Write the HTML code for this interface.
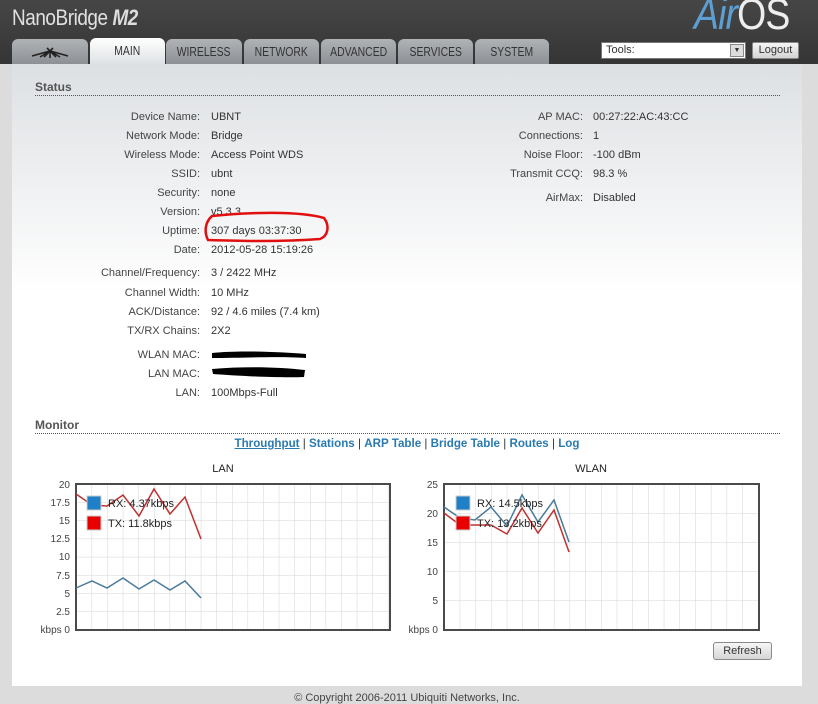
<!DOCTYPE html>
<html><head><meta charset="utf-8"><style>
*{margin:0;padding:0;box-sizing:border-box}
body{width:818px;height:700px;overflow:hidden;background:#dcdcdc;font-family:"Liberation Sans",Arial,sans-serif;font-size:11px;color:#333;position:relative}
.hdr{position:absolute;left:0;top:0;width:818px;height:64px;background:linear-gradient(#464646,#353535)}
.logo{position:absolute;left:12px;top:5px;color:#e0e0e0;font-size:22px;transform:scaleX(.86);transform-origin:left;letter-spacing:-.5px}
.logo b{font-style:italic;font-weight:bold;color:#ddd}
.air{position:absolute;left:694px;top:-10px;font-size:44px;transform:scaleX(.85);transform-origin:left;font-weight:normal;letter-spacing:-1px}
.tab{position:absolute;top:39px;height:25px;background:linear-gradient(#b0b3b6,#8d9094);border-radius:6px 6px 0 0;color:#333;font-size:13px;text-align:center;line-height:26px}
.tab span{display:inline-block;transform:scaleX(.8)}
.tab.on{background:linear-gradient(#fff,#dde0e3);top:38px;height:27px}
.panel{position:absolute;left:12px;top:64px;width:790px;height:622px;background:linear-gradient(#dde0e3 0,#fff 230px,#fff)}
.h{position:absolute;left:35px;font-weight:bold;font-size:12px;color:#555;width:745px;border-bottom:1px dotted #555;padding-bottom:1px}
.l{position:absolute;text-align:right;width:200px;left:0;color:#444}
.v{position:absolute;left:211px;color:#333}
.rl{position:absolute;text-align:right;width:200px;left:383px;color:#444}
.rv{position:absolute;left:593px;color:#333}
.r{position:absolute;top:1px;left:0;width:818px;height:420px}
a{color:#2a7ab0;font-weight:bold;text-decoration:none}
</style></head><body>
<div class="hdr"></div>
<div class="logo">NanoBridge <b>M2</b></div>
<div class="air"><span style="color:#5b9fd3;font-style:italic">Air</span><span style="color:#eee">OS</span></div>
<div class="tab" style="left:12px;width:76px"><svg width="40" height="14" viewBox="0 0 40 14" style="vertical-align:middle"><path d="M2 10 L20 5 L38 10 M20 5 L14 11 M20 5 L26 11 M20 5 L20 12 M20 5 L10 11 M20 5 L30 11 M17 2 L20 5 L23 2" stroke="#222" stroke-width="1.6" fill="none"/></svg></div>
<div class="tab on" style="left:90px;width:75px"><span>MAIN</span></div>
<div class="tab" style="left:166px;width:76px"><span>WIRELESS</span></div>
<div class="tab" style="left:244px;width:75px"><span>NETWORK</span></div>
<div class="tab" style="left:321px;width:75px"><span>ADVANCED</span></div>
<div class="tab" style="left:398px;width:75px"><span>SERVICES</span></div>
<div class="tab" style="left:475px;width:74px"><span>SYSTEM</span></div>
<div style="position:absolute;left:601px;top:42px;width:145px;height:17px;background:#fff;border:1px solid #777;font-size:11px;padding-left:4px;line-height:15px">Tools:<div style="position:absolute;right:1px;top:1px;width:14px;height:13px;background:#ddd;border:1px solid #888;font-size:7px;text-align:center;line-height:12px">▼</div></div>
<div style="position:absolute;left:752px;top:42px;width:47px;height:17px;background:linear-gradient(#f4f4f4,#d4d4d4);border:1px solid #888;border-radius:2px;font-size:11px;text-align:center;line-height:15px">Logout</div>
<div class="panel"></div>
<div class="h" style="top:80px">Status</div>
<div class="r">
<div class="l" style="top:110px">Device Name:</div><div class="v" style="top:110px">UBNT</div>
<div class="l" style="top:129px">Network Mode:</div><div class="v" style="top:129px">Bridge</div>
<div class="l" style="top:148px">Wireless Mode:</div><div class="v" style="top:148px">Access Point WDS</div>
<div class="l" style="top:167px">SSID:</div><div class="v" style="top:167px">ubnt</div>
<div class="l" style="top:186px">Security:</div><div class="v" style="top:186px">none</div>
<div class="l" style="top:205px">Version:</div><div class="v" style="top:205px">v5.3.3</div>
<div class="l" style="top:224px">Uptime:</div><div class="v" style="top:224px">307 days 03:37:30</div>
<div class="l" style="top:243px">Date:</div><div class="v" style="top:243px">2012-05-28 15:19:26</div>
<div class="l" style="top:266px">Channel/Frequency:</div><div class="v" style="top:266px">3 / 2422 MHz</div>
<div class="l" style="top:286px">Channel Width:</div><div class="v" style="top:286px">10 MHz</div>
<div class="l" style="top:305px">ACK/Distance:</div><div class="v" style="top:305px">92 / 4.6 miles (7.4 km)</div>
<div class="l" style="top:324px">TX/RX Chains:</div><div class="v" style="top:324px">2X2</div>
<div class="l" style="top:348px">WLAN MAC:</div>
<div class="l" style="top:367px">LAN MAC:</div>
<div class="l" style="top:386px">LAN:</div><div class="v" style="top:386px">100Mbps-Full</div>
<div class="rl" style="top:110px">AP MAC:</div><div class="rv" style="top:110px">00:27:22:AC:43:CC</div>
<div class="rl" style="top:129px">Connections:</div><div class="rv" style="top:129px">1</div>
<div class="rl" style="top:148px">Noise Floor:</div><div class="rv" style="top:148px">-100 dBm</div>
<div class="rl" style="top:167px">Transmit CCQ:</div><div class="rv" style="top:167px">98.3 %</div>
<div class="rl" style="top:191px">AirMax:</div><div class="rv" style="top:191px">Disabled</div>
</div>
<svg style="position:absolute;left:0;top:0" width="818" height="420"><path d="M212 353 C240 350 280 352 306 354 L306 358 C280 356 240 358 212 358Z" fill="#000"/><path d="M212 369 C245 366 280 367 305 370 L304 377 C280 378 240 376 213 374Z" fill="#000"/><path d="M212 216 C250 212 300 211 324 218 C330 226 328 236 320 239 C280 242 240 241 208 240 C204 232 205 222 212 216Z" fill="none" stroke="#e01010" stroke-width="2.5"/></svg>
<div class="h" style="top:418px">Monitor</div>
<div style="position:absolute;left:0;width:814px;top:437px;text-align:center;font-size:11.6px;color:#333"><a style="text-decoration:underline">Throughput</a> | <a>Stations</a> | <a>ARP Table</a> | <a>Bridge Table</a> | <a>Routes</a> | <a>Log</a></div>
<svg style="position:absolute;left:0;top:455px" width="818" height="190" font-family="Liberation Sans,Arial,sans-serif" font-size="10" fill="#444">
<defs><pattern id="g" x="76" y="29" width="15.6" height="18.2" patternUnits="userSpaceOnUse"><path d="M0 0V18.2M0 0H15.6" stroke="#d4d4d4" fill="none"/></pattern>
<pattern id="g2" x="444" y="29" width="15.7" height="29" patternUnits="userSpaceOnUse"><path d="M0 0V29M0 0H15.7" stroke="#d4d4d4" fill="none"/></pattern></defs>
<text x="223" y="17" text-anchor="middle" font-size="11" fill="#222">LAN</text>
<text x="591" y="17" text-anchor="middle" font-size="11" fill="#222">WLAN</text>
<rect x="76" y="29" width="314" height="146" fill="url(#g)"/>
<rect x="76" y="29" width="314" height="146" fill="none" stroke="#4a4a4a" stroke-width="2"/>
<g text-anchor="end"><text x="70" y="33">20</text><text x="70" y="51">17.5</text><text x="70" y="69">15</text><text x="70" y="87">12.5</text><text x="70" y="105">10</text><text x="70" y="124">7.5</text><text x="70" y="142">5</text><text x="70" y="160">2.5</text><text x="70" y="178">kbps 0</text></g>
<polyline points="76,39 92,50 107,51 123,40 139,61 154,34 170,59 185,42 201,84" fill="none" stroke="#c03030" stroke-width="1.5"/>
<polyline points="76,133 92,126 107,133 123,123 139,134 154,125 170,135 185,126 201,143" fill="none" stroke="#4a7a9a" stroke-width="1.5"/>
<rect x="87" y="41" width="14" height="14" fill="#1f80c8" stroke="#ccc"/><rect x="87" y="61" width="14" height="14" fill="#e80000" stroke="#ccc"/>
<text x="108" y="52" font-size="11" fill="#222">RX: 4.37kbps</text><text x="108" y="72" font-size="11" fill="#222">TX: 11.8kbps</text>
<rect x="444" y="29" width="315" height="146" fill="url(#g2)"/>
<rect x="444" y="29" width="315" height="146" fill="none" stroke="#4a4a4a" stroke-width="2"/>
<g text-anchor="end"><text x="438" y="33">25</text><text x="438" y="62">20</text><text x="438" y="91">15</text><text x="438" y="120">10</text><text x="438" y="149">5</text><text x="438" y="178">kbps 0</text></g>
<polyline points="444,52 460,63 475,65 491,52 507,71 522,40 538,67 554,45 569,87" fill="none" stroke="#4a7a9a" stroke-width="1.5"/>
<polyline points="444,58 460,70 475,70 491,70 507,79 522,53 538,78 554,55 569,97" fill="none" stroke="#c03030" stroke-width="1.5"/>
<rect x="456" y="41" width="14" height="14" fill="#1f80c8" stroke="#ccc"/><rect x="456" y="61" width="14" height="14" fill="#e80000" stroke="#ccc"/>
<text x="477" y="52" font-size="11" fill="#222">RX: 14.5kbps</text><text x="477" y="72" font-size="11" fill="#222">TX: 13.2kbps</text>
</svg>
<div style="position:absolute;left:713px;top:642px;width:59px;height:18px;background:linear-gradient(#f6f6f6,#d6d6d6);border:1px solid #888;border-radius:3px;text-align:center;line-height:16px;font-size:11px;color:#333">Refresh</div>
<div style="position:absolute;left:0;width:814px;top:692px;text-align:center;font-size:11px;color:#444">© Copyright 2006-2011 Ubiquiti Networks, Inc.</div>
</body></html>
